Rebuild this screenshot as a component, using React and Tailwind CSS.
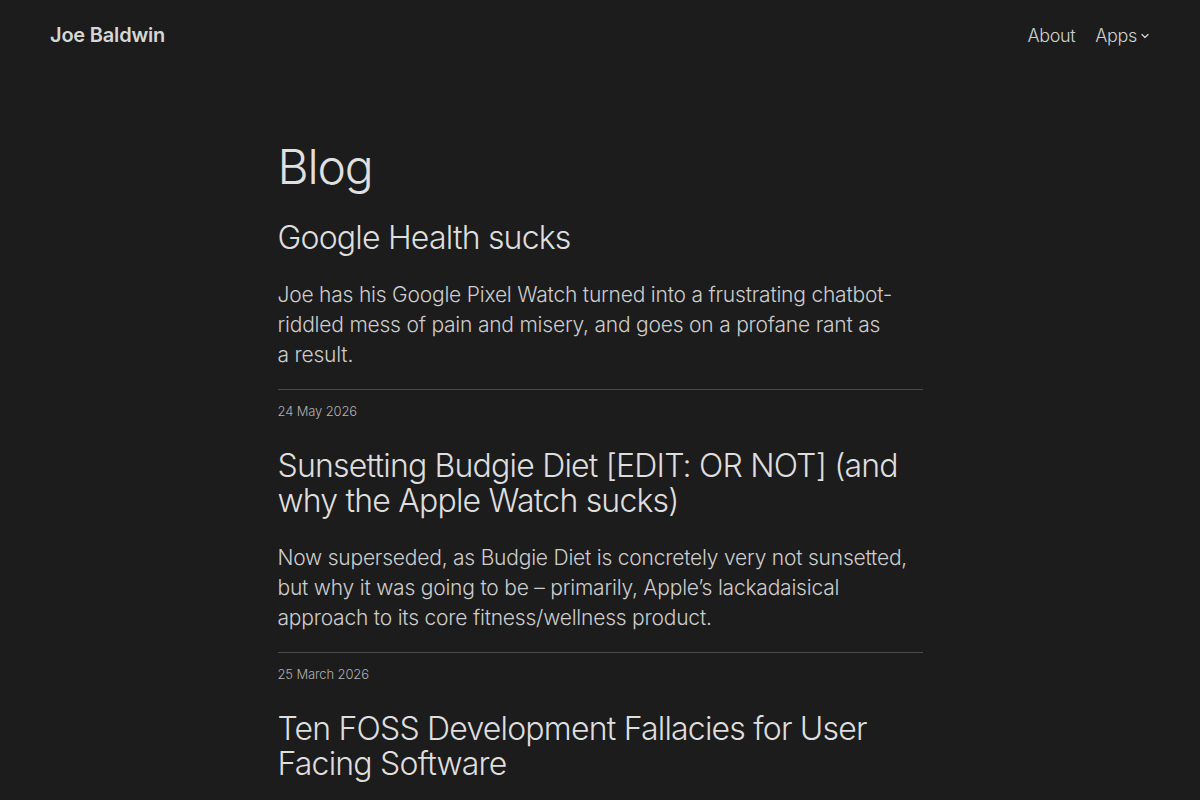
const posts = [
  {
    title: "Google Health sucks",
    excerpt:
      "Joe has his Google Pixel Watch turned into a frustrating chatbot-riddled mess of pain and misery, and goes on a profane rant as a\u00a0result.",
  },
  {
    date: "24 May 2026",
    title: "Sunsetting Budgie Diet [EDIT: OR NOT] (and why the Apple Watch sucks)",
    excerpt:
      "Now superseded, as Budgie Diet is concretely very not sunsetted, but why it was going to be – primarily, Apple’s lackadaisical approach to its core fitness/wellness product.",
  },
  {
    date: "25 March 2026",
    title: "Ten FOSS Development Fallacies for User Facing Software",
    excerpt:
      "A list of the things open source developers keep getting wrong when they build software for people who are not themselves.",
  },
];

function ChevronDown() {
  return (
    <svg width="10" height="10" viewBox="0 0 10 10" fill="none" className="ml-[3px] mt-[2px]">
      <path d="M2 3.5 L5 6.5 L8 3.5" stroke="currentColor" strokeWidth="1.3" strokeLinecap="round" strokeLinejoin="round" />
    </svg>
  );
}

export default function App() {
  return (
    <div
      className="min-h-screen bg-[#1c1c1c] text-[#dcdcdc]"
      style={{ fontFamily: "Inter, 'Noto Sans', sans-serif" }}
    >
      {/* Top bar */}
      <header className="flex items-center justify-between px-[50px] h-[70px]">
        <a className="text-[20px] font-semibold tracking-[-0.01em] text-[#d6d6d6]">Joe Baldwin</a>
        <nav className="flex items-center gap-5 text-[18px] font-light tracking-[-0.02em] text-[#cfcfcf]">
          <a>About</a>
          <a className="flex items-center">
            Apps
            <ChevronDown />
          </a>
        </nav>
      </header>

      <main className="mx-auto w-[645px] pt-[70px]">
        <h1 className="text-[48px] leading-[53px] font-light tracking-[-0.025em] text-[#e0e0e0]">Blog</h1>

        {posts.map((p, i) => (
          <article key={i}>
            {p.date && (
              <>
                <hr className="mt-[19px] border-t border-[#4a4a4a]" />
                <div className="mt-[11px] text-[13px] leading-[20px] font-light tracking-[-0.01em] text-[#b0b0b0]">
                  {p.date}
                </div>
              </>
            )}
            <h2 className="mt-[27px] text-[32px] leading-[35px] font-light tracking-[-0.025em] text-[#dedede]">
              {p.title}
            </h2>
            <p className="mt-[25px] text-[21px] leading-[30px] font-light tracking-[-0.01em] text-[#cdcdcd]">
              {p.excerpt}
            </p>
          </article>
        ))}
      </main>
    </div>
  );
}
